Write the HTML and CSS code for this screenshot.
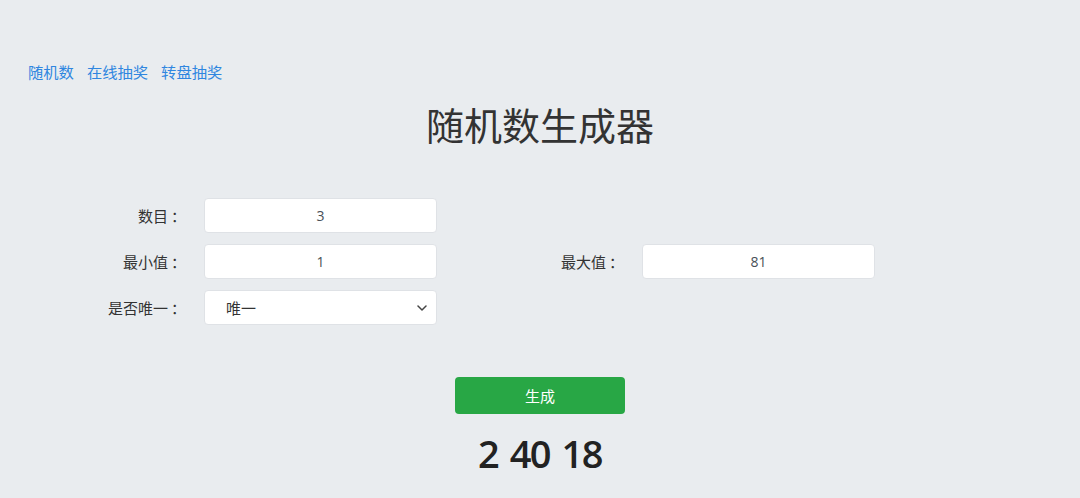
FILE: index.html
```html
<!DOCTYPE html>
<html lang="zh-CN">
<head>
<meta charset="utf-8">
<title>随机数生成器</title>
<link rel="stylesheet" href="styles.css">
</head>
<body>
<nav class="nav">
  <a href="#">随机数</a>
  <a href="#">在线抽奖</a>
  <a href="#">转盘抽奖</a>
</nav>
<h1 class="title">随机数生成器</h1>
<form class="form">
  <label class="label">数目<span class="colon">：</span></label>
  <div class="field"><input class="input" type="text" value="3"></div>
  <span></span><span></span>
  <label class="label">最小值<span class="colon">：</span></label>
  <div class="field"><input class="input" type="text" value="1"></div>
  <label class="label">最大值<span class="colon">：</span></label>
  <div class="field"><input class="input" type="text" value="81"></div>
  <label class="label">是否唯一<span class="colon">：</span></label>
  <div class="field select-wrap">
    <select class="input select"><option>唯一</option><option>不唯一</option></select>
    <svg class="chev" width="10" height="6" viewBox="0 0 10 6"><path d="M1 1l4 4 4-4" fill="none" stroke="#444" stroke-width="1.5" stroke-linecap="round" stroke-linejoin="round"/></svg>
  </div>
</form>
<div class="actions"><button class="btn" type="button">生成</button></div>
<div class="result">2 40 18</div>
</body>
</html>
```
FILE: styles.css
```css
* { box-sizing: border-box; }
body {
  margin: 0;
  background: #e9ecef;
  font-family: "Open Sans", "Noto Sans CJK SC", sans-serif;
  color: #333;
}
.nav {
  display: flex;
  gap: 13px;
  padding: 61px 0 0 28px;
  font-size: 15.3px;
  line-height: 22px;
}
.nav a { color: #2f86e0; text-decoration: none; }
.title {
  margin: 19px 0 0;
  text-align: center;
  font-size: 38px;
  line-height: 46px;
  font-weight: 400;
  color: #333;
}
.form {
  margin: 50px 0 0 14px;
  width: 876px;
  display: grid;
  grid-template-columns: 176px 262px 176px 262px;
  grid-auto-rows: 35px;
  row-gap: 11px;
}
.label {
  display: flex;
  align-items: center;
  justify-content: flex-end;
  padding-right: 4px;
  font-size: 15px;
  color: #333;
}
.colon { padding-left: 3px; }
.field { padding: 0 15px 0 14px; position: relative; }
.input {
  width: 100%;
  height: 35px;
  border: 1px solid #dfe2e6;
  border-radius: 4px;
  background: #fff;
  text-align: center;
  font-family: "Open Sans", "Noto Sans CJK SC", sans-serif;
  font-size: 14px;
  color: #495057;
  outline: none;
}
.select {
  appearance: none;
  -webkit-appearance: none;
  text-align: left;
  padding-left: 21px;
  font-size: 15px;
  color: #333;
}
.chev {
  position: absolute;
  right: 25px;
  top: 15px;
  pointer-events: none;
}
.actions {
  display: flex;
  justify-content: center;
  margin-top: 52px;
}
.btn {
  width: 170px;
  height: 37px;
  border: none;
  border-radius: 4px;
  background: #28a745;
  color: #fff;
  font-family: "Open Sans", "Noto Sans CJK SC", sans-serif;
  font-size: 15px;
}
.result {
  margin-top: 15px;
  text-align: center;
  font-size: 38px;
  line-height: 48px;
  font-weight: 600;
  letter-spacing: -1.5px;
  word-spacing: 3px;
  color: #222;
}
```
